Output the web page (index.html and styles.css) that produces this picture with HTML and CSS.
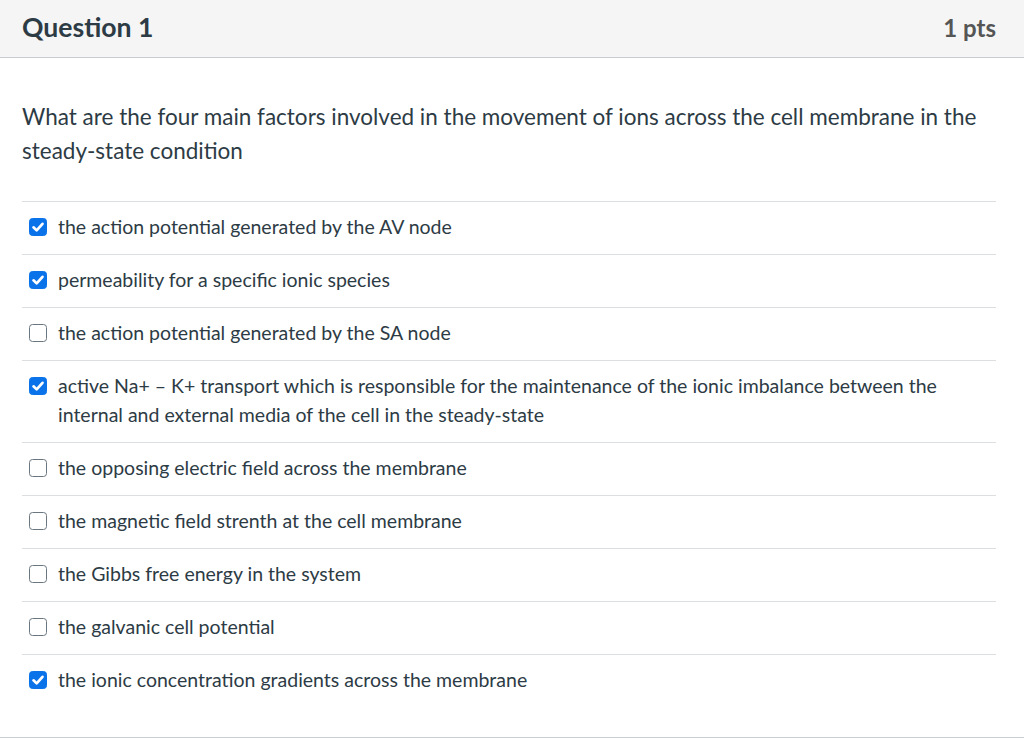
FILE: index.html
```html
<!DOCTYPE html>
<html>
<head>
<meta charset="utf-8">
<link rel="stylesheet" href="styles.css">
</head>
<body>
<div class="question">
  <div class="header">
    <h2 class="title">Question 1</h2>
    <span class="points">1 pts</span>
  </div>
  <div class="content">
    <p class="text">What are the four main factors involved in the movement of ions across the cell membrane in the steady-state condition</p>
    <div class="answers">
      <div class="answer"><span class="box checked"><svg viewBox="0 0 16 16"><path d="M4 8.3 L6.8 11 L12 5.2" /></svg></span><span class="label">the action potential generated by the AV node</span></div>
      <div class="answer"><span class="box checked"><svg viewBox="0 0 16 16"><path d="M4 8.3 L6.8 11 L12 5.2" /></svg></span><span class="label">permeability for a specific ionic species</span></div>
      <div class="answer"><span class="box"></span><span class="label">the action potential generated by the SA node</span></div>
      <div class="answer"><span class="box checked"><svg viewBox="0 0 16 16"><path d="M4 8.3 L6.8 11 L12 5.2" /></svg></span><span class="label">active Na+ – K+ transport which is responsible for the maintenance of the ionic imbalance between the internal and external media of the cell in the steady-state</span></div>
      <div class="answer"><span class="box"></span><span class="label">the opposing electric field across the membrane</span></div>
      <div class="answer"><span class="box"></span><span class="label">the magnetic field strenth at the cell membrane</span></div>
      <div class="answer"><span class="box"></span><span class="label">the Gibbs free energy in the system</span></div>
      <div class="answer"><span class="box"></span><span class="label">the galvanic cell potential</span></div>
      <div class="answer"><span class="box checked"><svg viewBox="0 0 16 16"><path d="M4 8.3 L6.8 11 L12 5.2" /></svg></span><span class="label">the ionic concentration gradients across the membrane</span></div>
    </div>
  </div>
</div>
</body>
</html>
```
FILE: styles.css
```css
html, body {
  margin: 0;
  padding: 0;
  background: #fff;
  font-family: Lato, "Open Sans", sans-serif;
  color: #2d3b45;
}
.question {
  width: 1024px;
  height: 737px;
  border-bottom: 1px solid #c7cdd1;
  box-sizing: content-box;
}
.header {
  height: 57px;
  background: #f5f5f5;
  border-bottom: 1px solid #c7cdd1;
  display: flex;
  align-items: center;
  justify-content: space-between;
  padding: 0 28px 0 22px;
}
.title {
  margin: 0;
  font-size: 26.6px;
  font-weight: 700;
  color: #2d3b45;
  position: relative;
  top: -2px;
}
.points {
  font-size: 24px;
  font-weight: 700;
  color: #555;
  position: relative;
  top: -1px;
}
.content {
  padding: 42px 28px 0 22px;
}
.text {
  margin: 0 0 33px;
  font-size: 22.5px;
  line-height: 34px;
}
.answers {
  display: flex;
  flex-direction: column;
}
.answer {
  border-top: 1px solid #dcdfe2;
  display: flex;
  align-items: flex-start;
  padding: 10px 0 13px 7px;
  gap: 11px;
  font-size: 19.5px;
  line-height: 29px;
}
.box {
  flex: none;
  width: 18px;
  height: 18px;
  margin-top: 6px;
  border: 1.5px solid #6b7780;
  border-radius: 3.5px;
  box-sizing: border-box;
  background: #fff;
  display: flex;
}
.box.checked {
  background: #0b73ea;
  border-color: #0b73ea;
}
.box svg {
  width: 18px;
  height: 18px;
  margin: -1.5px;
}
.box svg path {
  fill: none;
  stroke: #fff;
  stroke-width: 2.4;
  stroke-linecap: round;
  stroke-linejoin: round;
}
.label {
  flex: 1;
}
```
